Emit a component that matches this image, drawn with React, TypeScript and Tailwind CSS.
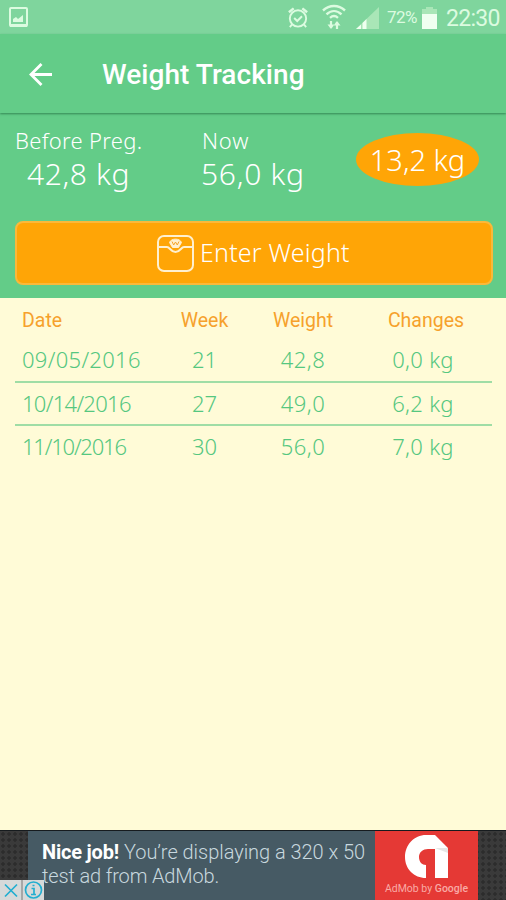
interface WeightEntry {
  date: string;
  dateSpacing: string;
  week: string;
  weight: string;
  change: string;
}

const entries: WeightEntry[] = [
  { date: "09/05/2016", dateSpacing: "tracking-[0.3px]", week: "21", weight: "42,8", change: "0,0 kg" },
  { date: "10/14/2016", dateSpacing: "tracking-[-0.7px]", week: "27", weight: "49,0", change: "6,2 kg" },
  { date: "11/10/2016", dateSpacing: "tracking-[-1.2px]", week: "30", weight: "56,0", change: "7,0 kg" },
];

const StatusBar = () => (
  <div className="flex h-[34px] items-center bg-[#7fd59d] pl-[9px] pr-[6px] pt-px text-[#dcfbe0]">
    <svg width="19" height="21" viewBox="0 0 19 21" fill="none">
      <rect x="1" y="1" width="17" height="18" rx="1" stroke="currentColor" strokeWidth="2" />
      <path d="M1 18.5h17" stroke="currentColor" strokeWidth="3" />
      <path d="M4 15v-3l3-2 2 2 5-4v7z" fill="currentColor" />
    </svg>
    <svg className="ml-auto" width="22" height="23" viewBox="0 0 22 24" fill="none" stroke="currentColor" strokeWidth="2">
      <circle cx="11" cy="13" r="8.5" />
      <path d="M1.5 6.5l5-4M20.5 6.5l-5-4" strokeWidth="2.6" />
      <path d="M7 12.5l3.2 3.2 5-5M5 19l-2.5 3M17 19l2.5 3" />
    </svg>
    <svg className="mb-[2px] ml-[13px]" width="24" height="26" viewBox="0 0 24 26" fill="none" stroke="currentColor" strokeWidth="2.4">
      <path d="M1 6.5c6.500-6 15.500-6 22 0M4.500 10.300c4.600-4.300 10.400-4.300 15 0M8 13.800c2.600-2.300 5.400-2.300 8 0" />
      <path d="M9 17v7M15 25v-7" strokeWidth="2.2" />
      <path d="M5.500 20.500h7L9 25zM11.500 21.500h7L15 17z" fill="currentColor" stroke="none" />
    </svg>
    <svg className="ml-[10px]" width="23" height="22" viewBox="0 0 23 22">
      <path d="M0 22L23 0v22z" fill="#a9e6b7" />
      <path d="M0 22l5-4.500V22zM6.500 22v-6l4-4V22z" fill="#effff0" />
    </svg>
    <span className="ml-[8px] w-[33px] whitespace-nowrap pt-px font-[Roboto,sans-serif] text-[17px] tracking-[-0.6px]">72%</span>
    <svg className="ml-[2px]" width="15" height="22" viewBox="0 0 15 22">
      <path d="M4 0h7v2h4v6H0V2h4z" fill="#a9e6b7" />
      <path d="M0 7h15v15H0z" fill="#effff0" />
    </svg>
    <span className="ml-[9px] w-[54px] whitespace-nowrap pt-[3px] font-[Roboto,sans-serif] text-[23px] tracking-[-0.7px]">22:30</span>
  </div>
);

const TitleBar = () => (
  <div className="relative flex h-[79px] items-center bg-[#63cc88] pb-px pl-[29px] text-white shadow-[0_1px_2px_rgba(20,90,50,0.6)]">
    <svg className="mt-[2px]" width="23" height="23" viewBox="0 0 23 23" fill="none" stroke="currentColor" strokeWidth="2.8">
      <path d="M12.500 1L2 11.500 12.500 22M2 11.500h21" />
    </svg>
    <h1 className="ml-[50px] mt-[4px] font-[Roboto,sans-serif] text-[28px] font-medium leading-none tracking-[0.05px]">
      Weight Tracking
    </h1>
  </div>
);

const ScaleIcon = () => (
  <svg className="mt-px" width="37" height="37" viewBox="0 0 37 37" fill="none" stroke="#fff0cf" strokeWidth="2">
    <rect x="1" y="1" width="35" height="35" rx="6" />
    <path d="M1.500 12h8.500c3 0 3.500 5 8.500 5s5.500-5 8.500-5h8.500" />
    <path d="M12.500 7.500c1.500-4.500 10.500-4.500 12 0l-3 5h-6z" fill="#fff0cf" strokeWidth="1" />
    <path d="M15 6.500l1.700 3.500 1.800-3 1.800 3L22 6.500" stroke="#f4a52c" strokeWidth="1" />
  </svg>
);

const Summary = () => (
  <div className="h-[185px] bg-[#63cc88] px-[15px] font-['Noto_Sans',sans-serif] font-light text-white">
    <div className="flex h-[108px]">
      <div className="w-[187px] pt-[11px]">
        <div className="text-[22px] leading-[33px] tracking-[0.3px]">Before Preg.</div>
        <div className="pl-[12px] text-[30px] leading-[34px] tracking-[0.6px]">42,8 kg</div>
      </div>
      <div className="w-[154px] pt-[11px]">
        <div className="text-[22px] leading-[33px] tracking-[0.8px]">Now</div>
        <div className="-ml-px text-[30px] leading-[34px] tracking-[0.7px]">56,0 kg</div>
      </div>
      <div className="mt-[20px] flex h-[53px] w-[123px] items-center justify-center rounded-[50%] bg-[#ffa506] text-[29px]">
        13,2 kg
      </div>
    </div>
    <button className="flex h-[64px] w-[478px] items-center rounded-[8px] border-2 border-[#fbb83a] bg-[#ffa506] pb-px pl-[140px]">
      <ScaleIcon />
      <span className="ml-[6px] text-[25px] tracking-[0.2px]">Enter Weight</span>
    </button>
  </div>
);

const WeightTable = () => (
  <div className="grow pl-[15px] pr-[14px]">
    <div className="grid h-[41px] grid-cols-[140px_99px_98px_1fr] items-center pt-[4px] text-center font-[Roboto,sans-serif] text-[19.5px] text-[#f6a12c]">
      <div className="pl-[7px] text-left">Date</div>
      <div>Week</div>
      <div>Weight</div>
      <div className="pl-[8px]">Changes</div>
    </div>
    {entries.map((entry) => (
      <div
        key={entry.date}
        className="grid h-[43.5px] grid-cols-[140px_99px_98px_1fr] items-center border-b-2 border-[#9fdda5] text-center font-['Noto_Sans',sans-serif] text-[22px] font-light text-[#55c780] last:border-transparent"
      >
        <div className={`pl-[7px] text-left ${entry.dateSpacing}`}>{entry.date}</div>
        <div>{entry.week}</div>
        <div className="tracking-[0.5px]">{entry.weight}</div>
        <div className="pl-[2px] tracking-[0.3px]">{entry.change}</div>
      </div>
    ))}
  </div>
);

const AdBanner = () => (
  <div className="relative flex h-[70px] border-t border-[#161b1e] bg-[#3a3a3a] bg-[radial-gradient(#2c2c2c_35%,transparent_45%)] bg-[size:6px_6px] pl-[28px] font-[Roboto,sans-serif]">
    <div className="w-[347px] bg-[#465a64] pl-[14px] pt-[9px] text-[20px] leading-[24px] text-[#c8d8df]">
      <div className="whitespace-nowrap">
        <b className="tracking-[-0.2px] text-white">Nice job!</b> <span className="font-light tracking-[-0.04px]">You’re displaying a 320 x 50</span>
      </div>
      <div className="font-light tracking-[-0.15px]">test ad from AdMob.</div>
    </div>
    <div className="flex w-[103px] flex-col items-center bg-[#e53935] pt-[4px]">
      <svg width="43" height="44" viewBox="0 0 43 44">
        <path
          d="M21 43C9 43 0 34 0 22S9 0 21 0h9l13 13v30H30V14h-7c-5 0-9 3-9 8s3 8 7 8z"
          fill="#fff"
        />
        <path d="M30 13h13v5z" fill="#e6e6e6" />
      </svg>
      <div className="mt-[3px] whitespace-nowrap text-[10.5px] leading-[14px] text-[#f9aaa5]">
        AdMob by <span className="font-medium">Google</span>
      </div>
    </div>
    <div className="absolute bottom-0 left-0 h-[20px] w-[44px] bg-[#d6d9d9]">
      <svg width="44" height="20" viewBox="0 0 44 20" fill="none" stroke="#22aed0" strokeWidth="1.7">
        <path d="M5 4.500l12 12M17 4.500l-12 12" />
        <path d="M22 0v20" stroke="#777" strokeWidth="1" />
        <circle cx="33.500" cy="10" r="8" />
        <path d="M31.500 8.500h2.500v6M31 14.500h5M32.500 5.500h2" />
      </svg>
    </div>
  </div>
);

const App = () => {
  return (
    <div className="flex h-[900px] w-[506px] flex-col overflow-hidden bg-[#fffbd7]">
      <StatusBar />
      <TitleBar />
      <Summary />
      <WeightTable />
      <AdBanner />
    </div>
  );
};

export default App;
